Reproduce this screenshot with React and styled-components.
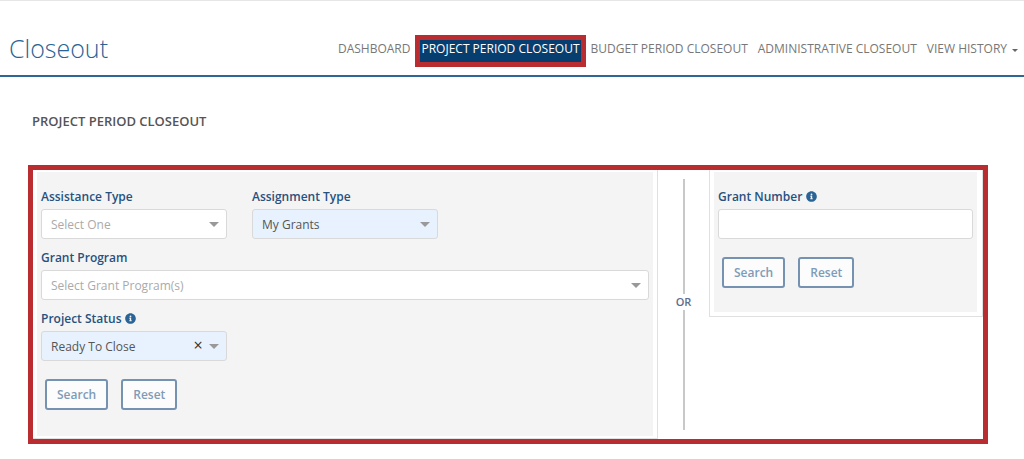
import React from 'react'
import styled, { createGlobalStyle } from 'styled-components'
import { FaInfoCircle } from 'react-icons/fa'

const GlobalStyle = createGlobalStyle`
  * {
    box-sizing: border-box;
  }
  body {
    margin: 0;
    background: #fff;
    font-family: 'Open Sans', 'Noto Sans', sans-serif;
    font-size: 12px;
    color: #555;
  }
  button, input, select {
    font-family: inherit;
    font-size: inherit;
  }
`

const Header = styled.header`
  display: flex;
  align-items: center;
  justify-content: space-between;
  height: 77px;
  padding: 20px 0 0 9px;
  border-top: 1px solid #e6e6e6;
  border-bottom: 2px solid #2d6798;
  h1 {
    margin: 0;
    font-size: 25px;
    font-weight: 300;
    line-height: 54px;
    color: #2a6496;
  }
`

const Nav = styled.nav`
  display: flex;
  align-items: center;
  padding: 6px 1px 0 0;
`

const NavLink = styled.a`
  display: flex;
  align-items: center;
  height: 32px;
  padding: ${props => (props.$active ? '0 1px 4px' : '0 5px 4px')};
  border: ${props => (props.$active ? '5px solid #b92c2f' : '0')};
  background: ${props => (props.$active ? '#063e70' : 'transparent')};
  color: ${props => (props.$active ? '#fff' : '#777')};
  line-height: 18px;
  text-decoration: none;
  white-space: nowrap;
`

const Caret = styled.span`
  margin: 2px 0 0 5px;
  border: 3px solid transparent;
  border-top-color: #666;
  border-bottom: 0;
`

const Main = styled.main`
  padding: 35px 36px 15px 28px;
  h2 {
    margin: 0 0 35px 4px;
    font-size: 13px;
    font-weight: 600;
    line-height: 18px;
    color: #555;
  }
`

const SearchArea = styled.div`
  display: grid;
  grid-template-columns: 625fr 51px 274fr;
  border: 5px solid #b92c2f;
`

const Panel = styled.section`
  align-self: ${props => (props.$short ? 'start' : 'stretch')};
  padding: ${props => (props.$short ? '2px 5px 4px 4px' : '2px 4px 2px 4px')};
  border: 1px solid #e0e0e0;
  border-width: ${props => (props.$short ? '0 1px 1px' : '0 1px 1px 0')};
`

const Form = styled.form`
  min-height: ${props => (props.$short ? '140px' : '264px')};
  padding: 16px 4px 0;
  background: #f4f4f4;
`

const Row = styled.div`
  display: grid;
  grid-template-columns: ${props => (props.$wide ? '1fr' : 'repeat(3, 1fr)')};
  column-gap: 25px;
  margin-bottom: 10px;
`

const Label = styled.label`
  display: flex;
  align-items: center;
  height: 16px;
  margin-bottom: 5px;
  font-weight: 600;
  color: #27517e;
  svg {
    margin-left: 4px;
    font-size: 11px;
    color: #2a6496;
  }
`

const SelectBox = styled.div`
  position: relative;
  &::after {
    content: '';
    position: absolute;
    top: 13px;
    right: 8px;
    border: 5px solid transparent;
    border-top-color: #999;
    border-bottom: 0;
    pointer-events: none;
  }
`

const StyledSelect = styled.select`
  display: block;
  width: 100%;
  height: 30px;
  padding: 0 24px 0 9px;
  appearance: none;
  border: 1px solid #d9d9d9;
  border-radius: 3px;
  background: ${props => (props.$filled ? '#e7f2fe' : '#fff')};
  color: ${props => (props.$filled ? '#555' : '#aaa')};
`

const ClearButton = styled.button`
  position: absolute;
  top: 5px;
  right: 22px;
  width: 14px;
  padding: 0;
  border: 0;
  background: none;
  color: #333;
  font-size: 16px;
  line-height: 18px;
`

const TextInput = styled.input`
  display: block;
  width: 100%;
  height: 30px;
  padding: 0 9px;
  border: 1px solid #d9d9d9;
  border-radius: 3px;
  background: #fff;
`

const Buttons = styled.div`
  display: flex;
  gap: 13px;
  padding: 8px 4px 0;
`

const Button = styled.button`
  height: 31px;
  padding: 0 10px;
  border: 2px solid #7593b0;
  border-radius: 3px;
  background: #fcfcfc;
  color: #7f9bb7;
  font-weight: 600;
`

const Divider = styled.div`
  display: flex;
  flex-direction: column;
  align-items: center;
  padding: 9px 0;
  font-size: 11px;
  font-weight: 600;
  line-height: 16px;
  color: #5d6d8c;
  &::before,
  &::after {
    content: '';
    flex: 23;
    width: 2px;
    background: #c8c8c8;
  }
  &::after {
    flex: 24;
  }
`

const Select = ({ id, label, value, info, clearable, placeholder }) => {
  return (
    <div>
      <Label htmlFor={id}>
        {label}
        {info && <FaInfoCircle />}
      </Label>
      <SelectBox>
        <StyledSelect id={id} $filled={!!value}>
          <option>{value || placeholder}</option>
        </StyledSelect>
        {clearable && (
          <ClearButton type='button' aria-label='Clear'>
            ×
          </ClearButton>
        )}
      </SelectBox>
    </div>
  )
}

const FormButtons = () => (
  <Buttons>
    <Button type='button'>Search</Button>
    <Button type='button'>Reset</Button>
  </Buttons>
)

const App = () => {
  return (
    <>
      <GlobalStyle />
      <Header>
        <h1>Closeout</h1>
        <Nav>
          <NavLink href='#dashboard'>DASHBOARD</NavLink>
          <NavLink href='#project' $active>
            PROJECT PERIOD CLOSEOUT
          </NavLink>
          <NavLink href='#budget'>BUDGET PERIOD CLOSEOUT</NavLink>
          <NavLink href='#administrative'>ADMINISTRATIVE CLOSEOUT</NavLink>
          <NavLink href='#history'>
            VIEW HISTORY
            <Caret />
          </NavLink>
        </Nav>
      </Header>
      <Main>
        <h2>PROJECT PERIOD CLOSEOUT</h2>
        <SearchArea>
          <Panel>
            <Form>
              <Row>
                <Select id='assistance' label='Assistance Type' placeholder='Select One' />
                <Select id='assignment' label='Assignment Type' value='My Grants' />
              </Row>
              <Row $wide>
                <Select id='program' label='Grant Program' placeholder='Select Grant Program(s)' />
              </Row>
              <Row>
                <Select id='status' label='Project Status' value='Ready To Close' info clearable />
              </Row>
              <FormButtons />
            </Form>
          </Panel>
          <Divider>OR</Divider>
          <Panel $short>
            <Form $short>
              <Row $wide>
                <div>
                  <Label htmlFor='grant-number'>
                    Grant Number
                    <FaInfoCircle />
                  </Label>
                  <TextInput id='grant-number' type='text' />
                </div>
              </Row>
              <FormButtons />
            </Form>
          </Panel>
        </SearchArea>
      </Main>
    </>
  )
}

export default App
